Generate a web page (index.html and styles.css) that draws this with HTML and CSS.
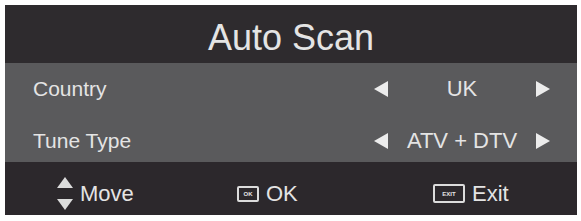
FILE: index.html
```html
<!DOCTYPE html>
<html lang="en">

<head>
    <meta charset="UTF-8" />
    <title>Auto Scan</title>
    <link rel="stylesheet" href="styles.css">
</head>

<body>
    <div class="panel">
        <div class="title">Auto Scan</div>

        <div class="settings">
            <div class="row">
                <span class="label">Country</span>
                <div class="option">
                    <svg class="arrow" width="16" height="16" viewBox="0 0 16 16"><polygon points="15,0 15,16 1,8" /></svg>
                    <span class="value">UK</span>
                    <svg class="arrow" width="16" height="16" viewBox="0 0 16 16"><polygon points="1,0 1,16 15,8" /></svg>
                </div>
            </div>
            <div class="row">
                <span class="label">Tune Type</span>
                <div class="option">
                    <svg class="arrow" width="16" height="16" viewBox="0 0 16 16"><polygon points="15,0 15,16 1,8" /></svg>
                    <span class="value">ATV + DTV</span>
                    <svg class="arrow" width="16" height="16" viewBox="0 0 16 16"><polygon points="1,0 1,16 15,8" /></svg>
                </div>
            </div>
        </div>

        <div class="footer">
            <div class="hint">
                <svg class="updown" width="16" height="33" viewBox="0 0 16 33">
                    <polygon points="8,0 16,11 0,11" />
                    <polygon points="0,22 16,22 8,33" />
                </svg>
                <span>Move</span>
            </div>
            <div class="hint">
                <span class="key key-ok">OK</span>
                <span>OK</span>
            </div>
            <div class="hint">
                <span class="key key-exit">EXIT</span>
                <span>Exit</span>
            </div>
        </div>
    </div>
</body>

</html>
```

FILE: styles.css
```css
body {
    font-family: 'Liberation Sans', Arial, sans-serif;
    background-color: #ffffff;
    margin: 0;
    padding: 5px 4px 6px 5px;
}

.panel {
    width: 572px;
    color: #e4e4e4;
}

.title {
    height: 58px;
    box-sizing: border-box;
    padding-top: 7px;
    background-color: #2e2b2e;
    display: flex;
    align-items: center;
    justify-content: center;
    font-size: 36px;
}

.settings {
    height: 99px;
    box-sizing: border-box;
    padding-top: 2px;
    background-color: #5a5a5c;
}

.row {
    height: 48px;
    margin-bottom: 4px;
    display: flex;
    align-items: center;
    justify-content: space-between;
    padding: 0 26px 0 28px;
    font-size: 21px;
}

.option {
    width: 178px;
    display: flex;
    align-items: center;
}

.option .value {
    flex: 1;
    text-align: center;
    font-size: 22px;
}

.arrow {
    fill: #ececec;
}

.footer {
    height: 53px;
    box-sizing: border-box;
    padding: 10px 0 0 52px;
    background-color: #2c282c;
    display: grid;
    grid-template-columns: 180px 196px 1fr;
    align-items: center;
    font-size: 22px;
}

.hint {
    display: flex;
    align-items: center;
    gap: 7px;
}

.updown {
    fill: #dcdcdc;
}

.key {
    border: 2px solid #dcdcdc;
    border-radius: 2px;
    font-size: 6px;
    font-weight: bold;
    display: flex;
    align-items: center;
    justify-content: center;
    box-sizing: border-box;
}

.key-ok {
    width: 22px;
    height: 16px;
}

.key-exit {
    width: 32px;
    height: 19px;
}
```
